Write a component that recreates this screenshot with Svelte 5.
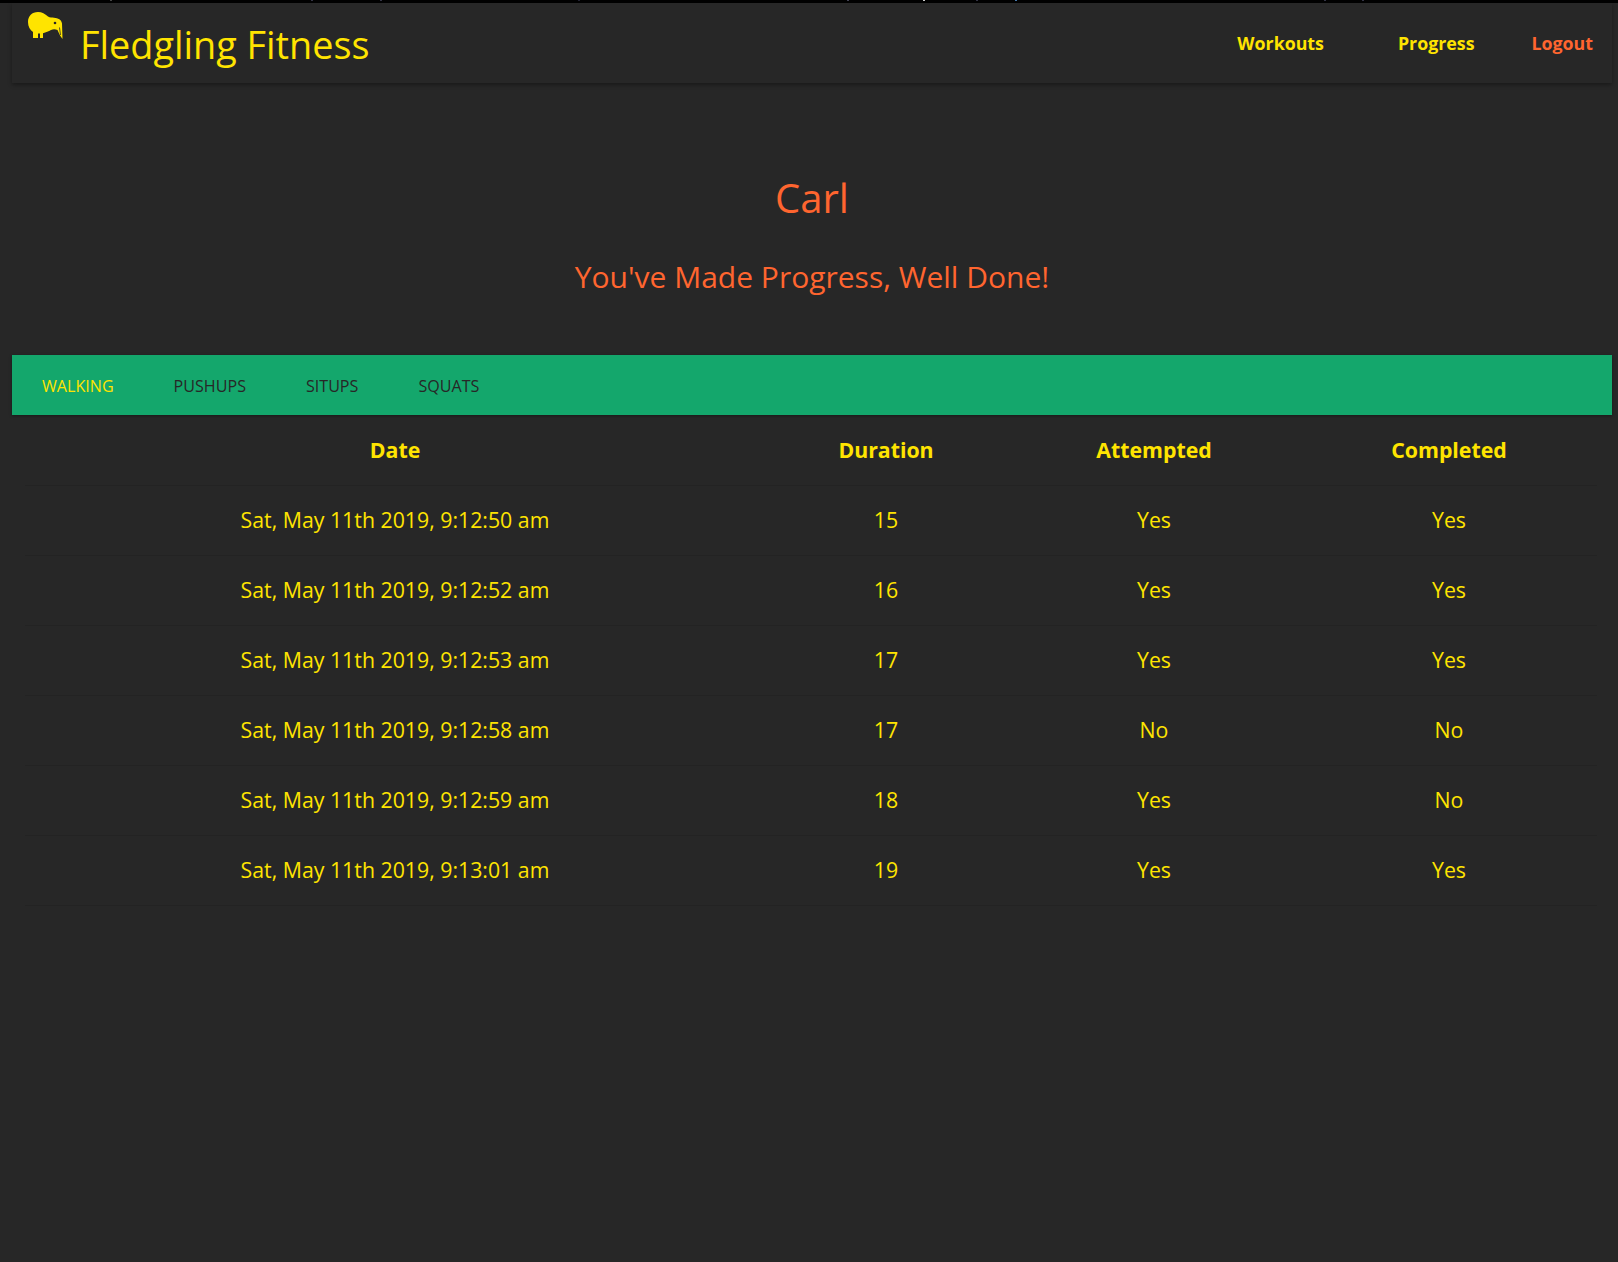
<script lang="ts">
  const tabs = ['Walking', 'Pushups', 'Situps', 'Squats']
  const rows = [
    ['Sat, May 11th 2019, 9:12:50 am', '15', 'Yes', 'Yes'],
    ['Sat, May 11th 2019, 9:12:52 am', '16', 'Yes', 'Yes'],
    ['Sat, May 11th 2019, 9:12:53 am', '17', 'Yes', 'Yes'],
    ['Sat, May 11th 2019, 9:12:58 am', '17', 'No', 'No'],
    ['Sat, May 11th 2019, 9:12:59 am', '18', 'Yes', 'No'],
    ['Sat, May 11th 2019, 9:13:01 am', '19', 'Yes', 'Yes'],
  ]
  // stray pixels along the top edge of the capture
  const specks = [
    [110, '#444'], [311, '#334'], [380, '#334'], [578, '#223'], [847, '#445'],
    [923, '#ccc'], [976, '#334'], [1015, '#47a'], [1324, '#334'], [1362, '#334'],
  ]
</script>

<div class="page">
  <div class="edge" aria-hidden="true">
    {#each specks as [x, c]}
      <i style="left:{x}px;background:{c}"></i>
    {/each}
  </div>

  <nav class="topnav">
    <a class="brand" href="#home">
      <svg class="kiwi" viewBox="0 0 37 28" width="37" height="28" aria-hidden="true">
        <path fill="currentColor" d="M1 10C1 4 5 0 11 0c4 0 7 2 10 4.500 2 1.200 4 1 6 1.200 4 .3 7.500 2 8 5.800L35.500 27c-2-2.500-3.500-5.500-5-9-2.500-1.200-4.500-1-6.500 0-2.500 1.300-5 2.500-8 3.200V26h-3v-4.500h-2V26H6v-6C3 18 1 14.500 1 10z" />
        <circle cx="28" cy="11" r="1.300" fill="#272727" />
        <path d="M32.500 15.500l1 7.500" stroke="#272727" stroke-width=".8" fill="none" />
      </svg>
      <span class="brand-name">Fledgling Fitness</span>
    </a>
    <ul class="links">
      <li class="workouts"><a href="#workouts">Workouts</a></li>
      <li class="progress"><a href="#progress">Progress</a></li>
      <li class="logout"><a href="#logout">Logout</a></li>
    </ul>
  </nav>

  <header class="greeting">
    <h1>Carl</h1>
    <h2>You've Made Progress, Well Done!</h2>
  </header>

  <ul class="tabs">
    {#each tabs as tab, i}
      <li class:active={i === 0}>{tab}</li>
    {/each}
  </ul>

  <table>
    <colgroup>
      <col class="c-date" /><col class="c-dur" /><col class="c-att" /><col class="c-comp" />
    </colgroup>
    <thead>
      <tr><th>Date</th><th>Duration</th><th>Attempted</th><th>Completed</th></tr>
    </thead>
    <tbody>
      {#each rows as row}
        <tr>
          {#each row as cell}<td>{cell}</td>{/each}
        </tr>
      {/each}
    </tbody>
  </table>
</div>

<style>
  :global(body) {
    background: #272727;
    font-family: "Open Sans", "Noto Sans", sans-serif;
  }
  .page {
    position: relative;
    min-height: 1262px;
    box-sizing: border-box;
    border-top: 3px solid #000;
    padding: 0 6px 0 12px;
    color: #ffe400;
  }
  .edge {
    position: absolute;
    top: -3px;
    left: 0;
    right: 0;
    height: 1px;
  }
  .edge i {
    position: absolute;
    top: 0;
    width: 2px;
    height: 1px;
  }
  .topnav {
    height: 80px;
    display: flex;
    justify-content: space-between;
    background: #272727;
    box-shadow: 0 2px 4px rgba(0, 0, 0, 0.35);
  }
  .brand {
    display: flex;
    color: inherit;
    text-decoration: none;
    padding: 9px 0 0 15px;
  }
  .kiwi { flex: none; }
  .brand-name {
    font-size: 37.8px;
    line-height: 66px;
    margin-left: 16px;
  }
  .links {
    list-style: none;
    display: flex;
    margin: 0;
    padding: 0;
    font-size: 17.8px;
    font-weight: 700;
    line-height: 80px;
  }
  .links a { color: inherit; text-decoration: none; }
  .workouts { margin-right: 74px; }
  .progress { margin-right: 57px; }
  .logout { margin-right: 19px; color: #ff652f; }
  .greeting {
    text-align: center;
    color: #ff652f;
    font-weight: 400;
    padding-top: 91px;
    height: 181px;
  }
  h1 {
    margin: 0;
    font-size: 40px;
    font-weight: 400;
    line-height: 48px;
  }
  h2 {
    margin: 35px 0 0;
    font-size: 30px;
    font-weight: 400;
    line-height: 40px;
  }
  .tabs {
    list-style: none;
    display: flex;
    gap: 60px;
    margin: 0;
    padding: 0 30px;
    height: 60px;
    line-height: 62px;
    background: #14a76c;
    color: #272727;
    font-size: 16.1px;
    text-transform: uppercase;
    box-shadow: 0 1px 3px rgba(0, 0, 0, 0.4);
  }
  .tabs .active { color: #ffe400; }
  table {
    width: 1572px;
    margin-left: 13px;
    border-collapse: collapse;
    table-layout: fixed;
    text-align: center;
    font-size: 21.3px;
  }
  .c-date { width: 740px; }
  .c-dur { width: 242px; }
  .c-att { width: 294px; }
  .c-comp { width: 296px; }
  tr { height: 70px; border-bottom: 1px solid #232323; }
  th, td { padding: 0; }
  td { padding-bottom: 2px; }
  th { font-weight: 700; }
</style>
